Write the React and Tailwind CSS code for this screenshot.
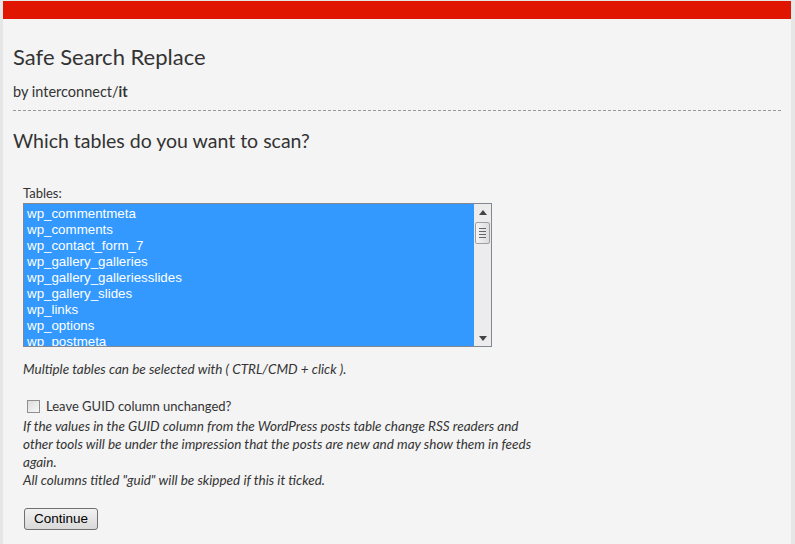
const tables = [
  "wp_commentmeta",
  "wp_comments",
  "wp_contact_form_7",
  "wp_gallery_galleries",
  "wp_gallery_galleriesslides",
  "wp_gallery_slides",
  "wp_links",
  "wp_options",
  "wp_postmeta",
];

function ScrollArrow({ down }) {
  return (
    <div className="flex h-[16px] items-center justify-center">
      <svg width="8" height="5" viewBox="0 0 8 5">
        <path d={down ? "M0 0h8L4 5z" : "M0 5h8L4 0z"} fill="#444" />
      </svg>
    </div>
  );
}

export default function App() {
  return (
    <div className="min-h-screen bg-[#e6e6e6] pl-[3px] pr-[4px] pt-[1px] font-['Lato',sans-serif] text-[#333]">
      <div className="min-h-[543px] bg-[#f4f4f4]">
        <div className="h-[18px] bg-[#e01600]" />

        <div className="px-[10px]">
          <h1 className="mt-[25px] text-[22px] leading-[26px]">Safe Search Replace</h1>
          <p className="mt-[14px] text-[14.5px] leading-[16px]">
            by interconnect/<b>it</b>
          </p>
          <div className="mt-[10px] h-0 border-t border-dashed border-[#999]" />

          <h2 className="mt-[18px] text-[19.5px] leading-[24px]">Which tables do you want to scan?</h2>

          <div className="mt-[33px] pl-[10px]">
            <label className="block text-[13px] leading-[15px]">Tables:</label>
            <div className="mt-[2px] flex h-[144px] w-[469px] border border-[#828790] bg-white">
              <div className="flex-1 overflow-hidden bg-[#3399ff] pt-[2px] font-['Liberation_Sans',sans-serif] text-[13.33px] leading-[16px] text-white">
                {tables.map((t) => (
                  <div key={t} className="pl-[3px]">
                    {t}
                  </div>
                ))}
              </div>
              <div className="flex w-[17px] flex-col bg-[#ececec]">
                <ScrollArrow />
                <div className="mx-[1px] mt-[2px] flex h-[22px] flex-col items-center justify-center gap-[2px] rounded-[2px] border border-[#a0a0a0] bg-gradient-to-r from-[#f5f5f5] to-[#dcdcdc]">
                  <div className="h-px w-[7px] bg-[#666]" />
                  <div className="h-px w-[7px] bg-[#666]" />
                  <div className="h-px w-[7px] bg-[#666]" />
                  <div className="h-px w-[7px] bg-[#666]" />
                </div>
                <div className="flex-1" />
                <ScrollArrow down />
              </div>
            </div>

            <p className="mt-[15px] text-[13.5px] italic leading-[15px]">
              Multiple tables can be selected with ( CTRL/CMD + click ).
            </p>

            <div className="mt-[21px] flex items-center pl-[4px]">
              <span className="h-[13px] w-[13px] border border-[#8f8f8f] bg-gradient-to-br from-[#dcdcdc] to-[#f8f8f8]" />
              <span className="ml-[6px] text-[13px] leading-[16px]">Leave GUID column unchanged?</span>
            </div>
            <p className="mt-[3px] w-[525px] text-[13.5px] italic leading-[18px]">
              If the values in the GUID column from the WordPress posts table change RSS readers and
              other tools will be under the impression that the posts are new and may show them in
              feeds again.
              <br />
              All columns titled "guid" will be skipped if this it ticked.
            </p>

            <button className="mt-[19px] ml-px h-[22px] w-[74px] rounded-[3px] border border-[#707070] bg-gradient-to-b from-[#f2f2f2] to-[#d9d9d9] font-['Liberation_Sans',sans-serif] text-[13.5px] text-black">
              Continue
            </button>
          </div>
        </div>
      </div>
    </div>
  );
}
